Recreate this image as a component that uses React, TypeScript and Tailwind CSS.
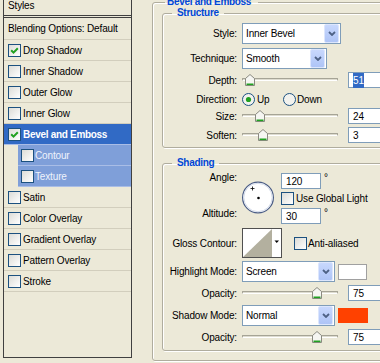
import React from "react";
import clsx from "clsx";

type Effect = { name: string; on?: boolean; active?: boolean; sub?: boolean };

const effects: Effect[] = [
  { name: "Drop Shadow", on: true },
  { name: "Inner Shadow" },
  { name: "Outer Glow" },
  { name: "Inner Glow" },
  { name: "Bevel and Emboss", on: true, active: true },
  { name: "Contour", sub: true },
  { name: "Texture", sub: true },
  { name: "Satin" },
  { name: "Color Overlay" },
  { name: "Gradient Overlay" },
  { name: "Pattern Overlay" },
  { name: "Stroke" },
];

function Check({ on = false }: { on?: boolean }) {
  return (
    <span className="flex h-[13px] w-[13px] shrink-0 items-center justify-center border border-[#1c5180] bg-linear-to-br from-[#dcdcd7] to-white">
      {on && (
        <svg width="9" height="9" viewBox="0 0 9 9">
          <path d="M1.2 4.3 L3.5 6.6 L7.8 2.2" fill="none" stroke="#21a121" strokeWidth="2" />
        </svg>
      )}
    </span>
  );
}

function Radio({ on = false }: { on?: boolean }) {
  return (
    <svg width="13" height="13" viewBox="0 0 13 13" className="shrink-0">
      <circle cx="6.5" cy="6.5" r="6" fill="#f2f2ee" stroke="#1c5180" />
      {on && <circle cx="6.5" cy="6.5" r="2.6" fill="#21a121" />}
    </svg>
  );
}

function Select({ value, className }: { value: string; className: string }) {
  return (
    <div className={clsx("flex h-[21px] shrink-0 items-center border border-[#7f9db9] bg-white pl-[3px] pr-[1px]", className)}>
      <span className="flex-1">{value}</span>
      <span className="flex h-[19px] w-[15px] items-center justify-center rounded-[2px] border border-[#dce6fd] bg-linear-to-b from-[#c8d8fd] to-[#aec4f6]">
        <svg width="8" height="5" viewBox="0 0 8 5">
          <path d="M1 1 L4 4 L7 1" fill="none" stroke="#4d6185" strokeWidth="1.8" />
        </svg>
      </span>
    </div>
  );
}

function Field({ children, className = "w-[40px]" }: { children: React.ReactNode; className?: string }) {
  return (
    <div className={clsx("flex h-[16px] shrink-0 items-center border border-[#7f9db9] bg-white pl-[4px]", className)}>
      {children}
    </div>
  );
}

function Slider({ at }: { at: number }) {
  return (
    <div className="relative h-[16px] w-[98px] shrink-0">
      <div className="absolute left-0 right-[2px] top-[6px] h-[3px] rounded-[1px] border border-[#a6a496] border-b-white bg-[#dedcd0]" />
      <svg className="absolute top-[2px]" style={{ left: at }} width="10" height="12" viewBox="0 0 10 12">
        <path d="M0.5 4.5 L5 0.5 L9.5 4.5 V11.5 H0.5 Z" fill="#f6f6f2" stroke="#8a8a80" />
        <path d="M1.5 10.3 H8.5" stroke="#21a121" strokeWidth="1.6" />
      </svg>
    </div>
  );
}

function Label({ children }: { children: React.ReactNode }) {
  return <div className="w-[74px] shrink-0 text-right">{children}</div>;
}

function SliderRow({ label, at, value, className }: { label: string; at: number; value: React.ReactNode; className: string }) {
  return (
    <div className={clsx("flex h-[16px] items-center", className)}>
      <Label>{label}</Label>
      <div className="ml-[5px]">
        <Slider at={at} />
      </div>
      <div className="ml-[8px]">
        <Field>{value}</Field>
      </div>
    </div>
  );
}

function EffectRow({ e }: { e: Effect }) {
  if (e.sub) {
    return (
      <div className="h-[21px] pl-[14px]">
        <div className="flex h-full items-center border-b border-[#a9bde6] bg-[#7f9fd9] pl-[3px] text-[#eef3fc]">
          <Check />
          <span className="ml-[1px]">{e.name}</span>
        </div>
      </div>
    );
  }
  return (
    <div
      className={clsx(
        "flex h-[21px] items-center border-b pl-[4px]",
        e.active ? "border-[#a9bde6] bg-[#316ac5] font-bold tracking-[-0.3px] text-white" : "border-[#d2cebd]"
      )}
    >
      <Check on={e.on} />
      <span className="ml-[2px]">{e.name}</span>
    </div>
  );
}

function StyleList() {
  return (
    <div className="ml-[3px] flex h-[358px] w-[129px] shrink-0 flex-col border-x border-b border-[#404040]">
      <div className="h-[16px] border-b border-[#404040] pl-[4px] leading-[12px]">Styles</div>
      <div className="mt-[1px] flex h-[23px] items-center border-y border-[#404040] border-b-[#d2cebd] pl-[4px]">
        Blending Options: Default
      </div>
      {effects.map((e) => (
        <EffectRow key={e.name} e={e} />
      ))}
    </div>
  );
}

const legend = "ml-[9px] px-[5px] font-bold leading-[12px] tracking-[-0.3px] text-[#0046d5]";
const box = "rounded-[3px] border border-[#b0ad9e] shadow-[inset_1px_1px_0_#fff,1px_1px_0_#fff]";

function Options() {
  return (
    <div className="ml-[20px] shrink-0">
      <fieldset className={clsx("-mt-[4px] w-[260px] px-[9px] pb-[9px]", box)}>
        <legend className="ml-[3px] pl-[2px] pr-[7px] font-bold leading-[12px] tracking-[-0.3px] text-[#0046d5]">
          Bevel and Emboss
        </legend>

        <fieldset className={clsx("-mt-[1px] pb-[4px] pt-[4px]", box)}>
          <legend className={legend}>Structure</legend>
          <div className="flex h-[21px] items-center">
            <Label>Style:</Label>
            <Select value="Inner Bevel" className="ml-[5px] w-[99px]" />
          </div>
          <div className="mt-[4px] flex h-[21px] items-center">
            <Label>Technique:</Label>
            <Select value="Smooth" className="ml-[5px] w-[85px]" />
          </div>
          <SliderRow
            label="Depth:"
            at={3}
            value={<span className="bg-[#316ac5] text-white">51</span>}
            className="mt-[3px]"
          />
          <div className="mt-[3px] flex h-[16px] items-center">
            <Label>Direction:</Label>
            <div className="ml-[5px] flex w-[41px] items-center">
              <Radio on />
              <span className="ml-[2px]">Up</span>
            </div>
            <div className="flex items-center">
              <Radio />
              <span className="ml-[1px]">Down</span>
            </div>
          </div>
          <SliderRow label="Size:" at={13} value="24" className="mt-[1px]" />
          <SliderRow label="Soften:" at={16} value="3" className="mt-[3px]" />
        </fieldset>

        <fieldset className={clsx("mt-[9px] pb-[5px] pt-[3px]", box)}>
          <legend className={legend}>Shading</legend>

          <div className="flex">
            <div className="flex w-[74px] shrink-0 flex-col text-right leading-[12px]">
              <div>Angle:</div>
              <div className="mt-[24px]">Altitude:</div>
            </div>
            <div className="ml-[5px] mt-[9px]">
              <svg width="32" height="33" viewBox="0 0 32 33">
                <circle cx="16" cy="16.5" r="15.4" fill="#fff" stroke="#4b5d85" strokeWidth="1.2" />
                <circle cx="16" cy="16.5" r="14.2" fill="none" stroke="#d3dbea" />
                <circle cx="16.5" cy="17" r="1.3" fill="#000" />
                <path d="M10.5 5.5 V9.5 M8.5 7.5 H12.5" stroke="#000" strokeWidth="0.8" />
              </svg>
            </div>
            <div className="ml-[7px] flex flex-col">
              <div className="mt-[1px] flex items-start">
                <Field>120</Field>
                <span className="ml-[3px] leading-[10px]">°</span>
              </div>
              <div className="mt-[3px] flex h-[13px] items-center">
                <Check />
                <span className="ml-[2px]">Use Global Light</span>
              </div>
              <div className="mt-[3px] flex items-start">
                <Field>30</Field>
                <span className="ml-[3px] leading-[10px]">°</span>
              </div>
            </div>
          </div>

          <div className="mt-[4px] flex h-[30px] items-center">
            <Label>Gloss Contour:</Label>
            <div className="ml-[5px] flex h-[30px] w-[40px] shrink-0 border border-[#505050] bg-white">
              <svg width="38" height="28" viewBox="0 0 38 28">
                <path d="M0 28 L29 0 L29 28 Z" fill="#b3b09f" />
                <path d="M31.5 11.5 H36 L33.75 14 Z" fill="#000" />
              </svg>
            </div>
            <div className="ml-[12px] flex items-center">
              <Check />
              <span className="ml-[1px]">Anti-aliased</span>
            </div>
          </div>

          <div className="mt-[3px] flex h-[21px] items-center">
            <Label>Highlight Mode:</Label>
            <Select value="Screen" className="ml-[5px] w-[93px]" />
            <div className="ml-[3px] h-[16px] w-[29px] shrink-0 border border-[#a0a0a0] bg-white" />
          </div>
          <SliderRow label="Opacity:" at={70} value="75" className="mt-[3px]" />
          <div className="mt-[4px] flex h-[21px] items-center">
            <Label>Shadow Mode:</Label>
            <Select value="Normal" className="ml-[5px] w-[93px]" />
            <div className="ml-[3px] h-[15px] w-[30px] shrink-0 bg-[#ff4100]" />
          </div>
          <SliderRow label="Opacity:" at={70} value="75" className="mt-[3px]" />
        </fieldset>
      </fieldset>
    </div>
  );
}

export default function App() {
  return (
    <div className="flex h-[363px] w-[380px] overflow-hidden bg-[#ece9d8] font-['Liberation_Sans',Arial,sans-serif] text-[10px] tracking-[-0.15px] text-black">
      <StyleList />
      <Options />
    </div>
  );
}
